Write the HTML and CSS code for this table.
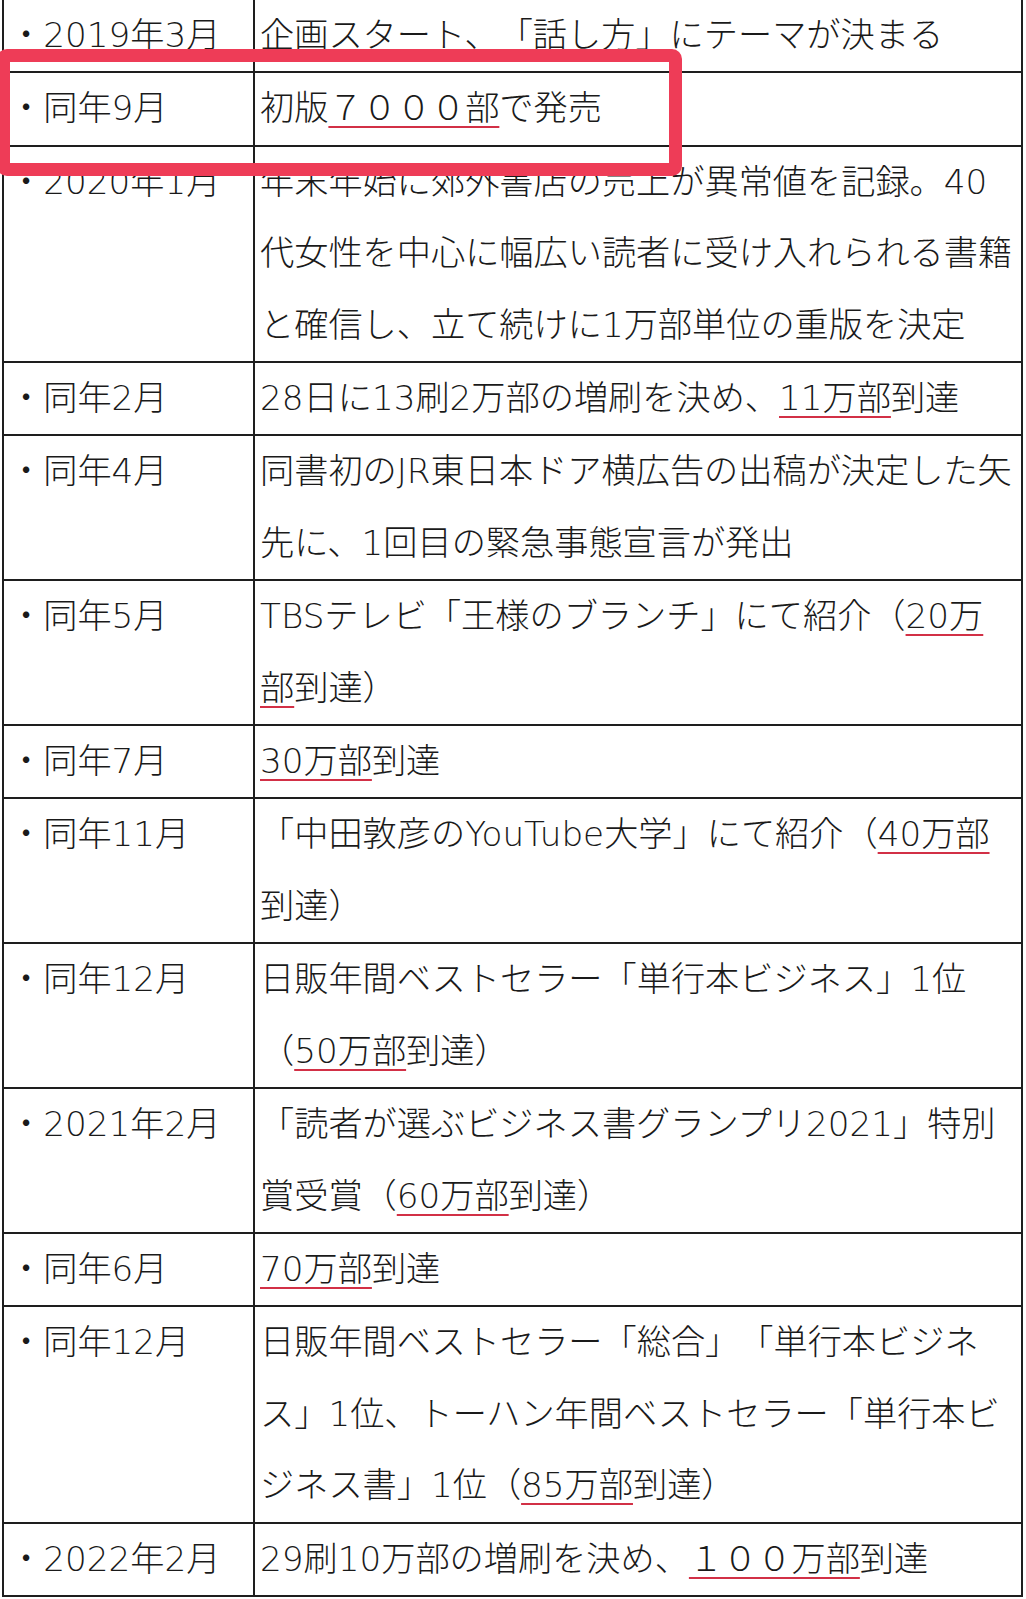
FILE: index.html
```html
<!DOCTYPE html>
<html lang="ja">
<head>
<meta charset="utf-8">
<title>timeline</title>
<link rel="stylesheet" href="styles.css">
</head>
<body>
<div class="wrap">
<table class="tl">
<tr><td class="d">・2019年3月</td><td class="c">企画スタート、「話し方」にテーマが決まる</td></tr>
<tr><td class="d">・同年9月</td><td class="c">初版<span class="u">７０００部</span>で発売</td></tr>
<tr><td class="d">・2020年1月</td><td class="c">年末年始に郊外書店の売上が異常値を記録。40<br>代女性を中心に幅広い読者に受け入れられる書籍<br>と確信し、立て続けに1万部単位の重版を決定</td></tr>
<tr><td class="d">・同年2月</td><td class="c">28日に13刷2万部の増刷を決め、<span class="u">11万部</span>到達</td></tr>
<tr><td class="d">・同年4月</td><td class="c">同書初のJR東日本ドア横広告の出稿が決定した矢<br>先に、1回目の緊急事態宣言が発出</td></tr>
<tr><td class="d">・同年5月</td><td class="c">TBSテレビ「王様のブランチ」にて紹介（<span class="u">20万</span><br><span class="u">部</span>到達）</td></tr>
<tr><td class="d">・同年7月</td><td class="c"><span class="u">30万部</span>到達</td></tr>
<tr><td class="d">・同年11月</td><td class="c">「中田敦彦のYouTube大学」にて紹介（<span class="u">40万部</span><br>到達）</td></tr>
<tr><td class="d">・同年12月</td><td class="c">日販年間ベストセラー「単行本ビジネス」1位<br>（<span class="u">50万部</span>到達）</td></tr>
<tr><td class="d">・2021年2月</td><td class="c">「読者が選ぶビジネス書グランプリ2021」特別<br>賞受賞（<span class="u">60万部</span>到達）</td></tr>
<tr><td class="d">・同年6月</td><td class="c"><span class="u">70万部</span>到達</td></tr>
<tr><td class="d">・同年12月</td><td class="c">日販年間ベストセラー「総合」「単行本ビジネ<br>ス」1位、トーハン年間ベストセラー「単行本ビ<br>ジネス書」1位（<span class="u">85万部</span>到達）</td></tr>
<tr><td class="d">・2022年2月</td><td class="c">29刷10万部の増刷を決め、<span class="u">１００万部</span>到達</td></tr>
</table>
<div class="hl"></div>
</div>
</body>
</html>
```

FILE: styles.css
```css
html, body {
  margin: 0;
  padding: 0;
  background: #ffffff;
}
body {
  font-family: "DejaVu Sans", "Noto Sans CJK JP", sans-serif;
  font-weight: 200;
  color: #1a1a1a;
  overflow: hidden;
  text-spacing-trim: space-all;
}
.wrap {
  position: relative;
  width: 1026px;
  height: 1599px;
}
.tl {
  border-collapse: collapse;
  table-layout: fixed;
  margin: -2px 0 0 2px;
  width: 1021px;
  font-size: 34.2px;
  line-height: 71.4px;
}
.tl td {
  border: 2px solid #1e1e1e;
  vertical-align: top;
  padding: 0;
  white-space: nowrap;
  overflow: visible;
}
.tl .d {
  width: 244px;
  padding-left: 5px;
}
.tl .c {
  padding-left: 5px;
}
.u {
  text-decoration: underline;
  text-decoration-color: #d23046;
  text-decoration-thickness: 2px;
  text-underline-offset: 6px;
}
.hl {
  position: absolute;
  left: -3px;
  top: 51px;
  width: 659px;
  height: 101px;
  border: 13px solid #ee3c57;
  border-radius: 10px;
}
```
